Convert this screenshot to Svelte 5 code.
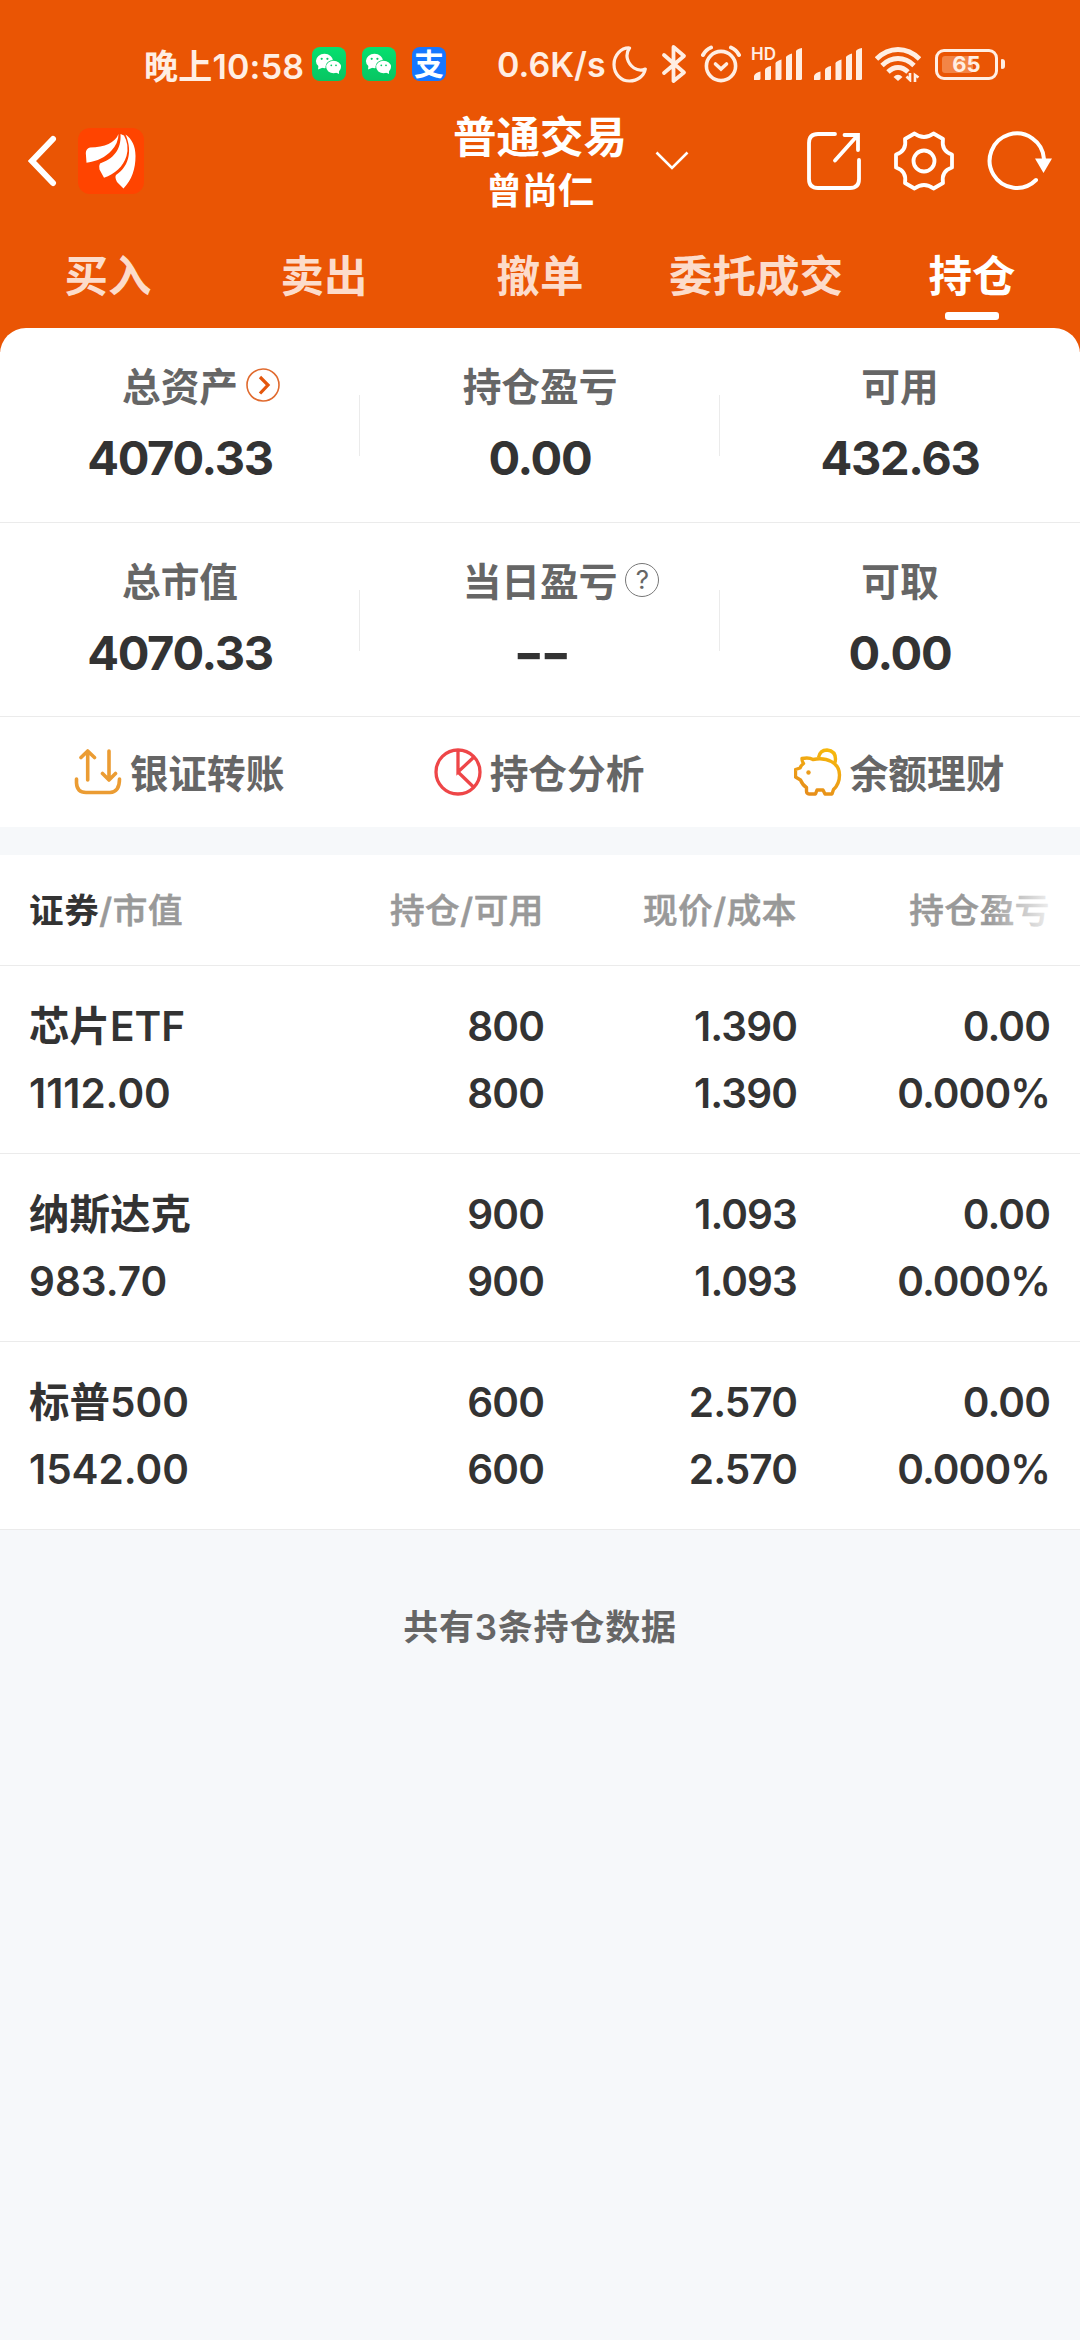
<script lang="ts">
	type Stat = { label: string; value: string; icon?: 'arrow' | 'help' };

	const tabs = ['买入', '卖出', '撤单', '委托成交', '持仓'];
	let activeTab = $state('持仓');

	const stats: Stat[][] = [
		[
			{ label: '总资产', value: '4070.33', icon: 'arrow' },
			{ label: '持仓盈亏', value: '0.00' },
			{ label: '可用', value: '432.63' }
		],
		[
			{ label: '总市值', value: '4070.33' },
			{ label: '当日盈亏', value: '--', icon: 'help' },
			{ label: '可取', value: '0.00' }
		]
	];

	const holdings = [
		{ name: '芯片ETF', market: '1112.00', amount: 800, usable: 800, price: '1.390', cost: '1.390', profit: '0.00', rate: '0.000%' },
		{ name: '纳斯达克', market: '983.70', amount: 900, usable: 900, price: '1.093', cost: '1.093', profit: '0.00', rate: '0.000%' },
		{ name: '标普500', market: '1542.00', amount: 600, usable: 600, price: '2.570', cost: '2.570', profit: '0.00', rate: '0.000%' }
	];
</script>

{#snippet wechat()}
	<svg class="app-icon" viewBox="0 0 34 34">
		<defs>
			<linearGradient id="wx" x1="0" y1="0" x2="0" y2="1">
				<stop offset="0" stop-color="#06e06f" />
				<stop offset="1" stop-color="#07c562" />
			</linearGradient>
		</defs>
		<rect width="34" height="34" rx="8" fill="url(#wx)" />
		<path d="M6.500 18 L6 22.500 L11 20.500z" fill="#fff" />
		<ellipse cx="12.500" cy="14" rx="8.600" ry="7.200" fill="#fff" />
		<ellipse cx="21.600" cy="20" rx="8.200" ry="7" fill="#07cf66" />
		<ellipse cx="21.600" cy="20" rx="7.400" ry="6.200" fill="#fff" />
		<path d="M23 25 L27 27 L27 23z" fill="#fff" />
		<g fill="#07cf66">
			<circle cx="9.700" cy="11.800" r="1.100" />
			<circle cx="15.400" cy="11.800" r="1.100" />
			<circle cx="19.300" cy="18.300" r="0.900" />
			<circle cx="24" cy="18.300" r="0.900" />
		</g>
	</svg>
{/snippet}

{#snippet signal()}
	<svg class="signal" width="48" height="32" viewBox="0 0 48 32" fill="#ffeee3">
		<path d="M0 32v-4q1-3.500 6.500-4.500v7q0 1.500-1.500 1.500z" />
		<path d="M11 32V21.500q1-2.500 6-3.500v12.500q0 1.500-1.500 1.500z" />
		<path d="M21.500 32V15q1-2 6-3.500v19q0 1.500-1.500 1.500z" />
		<path d="M32 32V9q1-2 6-3.500v25q0 1.500-1.500 1.500z" />
		<path d="M42 32V3q1-2 6-3v30.500q0 1.500-1.500 1.500z" />
	</svg>
{/snippet}

<div class="page">
	<header class="top">
		<div class="status-bar">
			<div class="status-left">
				<span class="clock">晚上10:58</span>
				{@render wechat()}
				{@render wechat()}
				<span class="app-icon alipay">支</span>
			</div>
			<div class="status-right">
				<span class="speed">0.6K/s</span>
				<svg class="moon" width="35" height="37" viewBox="0 0 35 37" fill="none" stroke="#ffeee3" stroke-width="3.200" stroke-linejoin="round">
					<path d="M17.500 2 C9 1.500 2 9.500 2 18.500 C2 28 9 35 17.500 35 C25.500 35 32 30 33.300 23 C30 24.500 26 24.500 22 22 C15.500 17.500 12.500 9 17.500 2z" />
				</svg>
				<svg class="bluetooth" width="26" height="40" viewBox="0 0 26 40" fill="none" stroke="#ffeee3" stroke-width="3.800" stroke-linecap="round" stroke-linejoin="round">
					<path d="M3 11 L23 28.500 L12.500 37 V3 L23 12 L3 29" />
				</svg>
				<svg class="alarm" width="40" height="38" viewBox="0 0 40 38" fill="none" stroke="#ffeee3" stroke-width="3.600" stroke-linecap="round">
					<circle cx="20" cy="21" r="14.600" />
					<path d="M14.500 19 L20 24 L25.500 19" stroke-width="3.600" />
					<path d="M2 10 Q5 4.500 10 2.500 M30 2.500 Q35 4.500 38 10" stroke-width="4" />
				</svg>
				<span class="signal-hd">
					<span class="hd">HD</span>
					{@render signal()}
				</span>
				{@render signal()}
				<svg class="wifi" width="46" height="35" viewBox="0 0 46 35" fill="none" stroke="#ffeee3" stroke-width="4.800">
					<path d="M1.500 12 Q11 2.500 23 2.500 Q35 2.500 44.500 12" />
					<path d="M7 18.500 Q14 11.500 23 11.500 Q32 11.500 39 18.500" />
					<path d="M13 25 Q17.500 20.500 23 20.500 Q28.500 20.500 33 25" />
					<path d="M18.500 30 Q23 25.500 27.500 30 L23 34z" fill="#ffeee3" stroke="none" />
					<path d="M31.500 29.500 L35 33 V26 M40 35 V28 L43.500 30.500" stroke-width="2.600" />
				</svg>
				<span class="battery"><span class="level"></span><b>65</b></span>
			</div>
		</div>

		<div class="nav">
			<div class="nav-left">
				<svg class="back" width="30" height="52" viewBox="0 0 30 52" fill="none" stroke="#fff" stroke-width="6" stroke-linecap="round" stroke-linejoin="miter">
					<path d="M25 4 L4 26 L25 48" />
				</svg>
				<svg width="66" height="66" viewBox="0 0 66 66">
					<rect width="66" height="66" rx="12" fill="#ff4400" />
					<g fill="#fff">
						<path d="M40.500 6 C37 15 27 19 12 19.500 Q8 20.500 7.800 25 L8.500 34.800 C20 33 27 29.500 33.500 22.500 Q40.500 15 40.500 6z" />
						<path d="M42.500 6 C43.500 22 35 31 22 35.500 Q20.500 38 21.500 41.500 L26 49.700 C37 46 45 39 48.500 28 Q51.500 17 46 7.500z" />
						<path d="M47.500 6.500 C53.500 20 53 37 38 47 Q36.500 49 39 54 L45.500 60.500 C54 51.500 57.500 41 57.500 28 C57.500 18 54 11 47.500 6.500z" />
					</g>
				</svg>
			</div>
			<div class="title">
				<h1>普通交易</h1>
				<p>曾尚仁</p>
				<svg class="caret" width="34" height="20" viewBox="0 0 34 20" fill="none" stroke="#fff" stroke-width="2.600">
					<path d="M1.500 1.500 L17 17 L32.500 1.500" />
				</svg>
			</div>
			<div class="nav-right">
				<svg width="54" height="58" viewBox="0 0 54 58" fill="none" stroke="#fff" stroke-width="3.800" stroke-linecap="round">
					<path d="M28 2 H11 Q2 2 2 11 V47 Q2 56 11 56 H43 Q52 56 52 47 V28" />
					<path d="M37.500 3 H51 V18 M50 4 L28 28.500" />
				</svg>
				<svg width="60" height="60" viewBox="1 0 60 60" fill="none" stroke="#fff" stroke-width="3.800" stroke-linejoin="round">
					<path d="M21.500 2.500 Q31 9.500 40.500 2.500 L50 8 Q48 20 59 23.500 V36.500 Q48 40 50 52 L40.500 57.500 Q31 50.500 21.500 57.500 L12 52 Q14 40 3 36.500 V23.500 Q14 20 12 8z" />
					<circle cx="31" cy="30" r="10.500" />
				</svg>
				<svg width="66" height="60" viewBox="0 0 66 60" fill="none" stroke="#fff" stroke-width="4" stroke-linecap="round">
					<path d="M49 49 A27.200 27.200 0 1 1 57 28" />
					<path d="M48 27.500 H65 L56.500 42z" fill="#fff" stroke="none" />
				</svg>
			</div>
		</div>

		<nav class="tabs">
			{#each tabs as tab (tab)}
				<button class:active={tab === activeTab} onclick={() => (activeTab = tab)}>{tab}</button>
			{/each}
		</nav>
	</header>

	<main>
		<section class="summary">
			{#each stats as row}
				<div class="stat-row">
					{#each row as stat (stat.label)}
						<div class="stat">
							<span class="label">
								{stat.label}
								{#if stat.icon === 'arrow'}
									<svg class="mark arrow" viewBox="0 0 34 34" fill="none" stroke="#e06a2e">
										<circle cx="17" cy="17" r="16" stroke-width="1.600" />
										<path d="M14 9 L22 17 L14 25.500" stroke="#e4560c" stroke-width="3.200" />
									</svg>
								{:else if stat.icon === 'help'}
									<span class="mark help">?</span>
								{/if}
							</span>
							<span class="value" class:dash={stat.value === '--'}>{stat.value}</span>
						</div>
					{/each}
				</div>
			{/each}

			<div class="actions">
				<div class="action">
					<svg width="48" height="48" viewBox="0 0 48 48" fill="none" stroke="#eb9c33" stroke-width="3.600" stroke-linecap="round" stroke-linejoin="round">
						<path d="M2.500 31 V35 Q3 44.500 12 44.500 H36 Q45.500 44 45.500 31" />
						<path d="M13.700 32 V3 M7 9.500 L13.700 3 L20.500 9.500" />
						<path d="M35 3 V32 M28.500 25.500 L35 32 L41.500 25.500" />
					</svg>
					<span>银证转账</span>
				</div>
				<div class="action">
					<svg width="48" height="48" viewBox="0 0 48 48" fill="none" stroke="#ee4648" stroke-width="3.300">
						<circle cx="24" cy="24" r="22" />
						<path d="M24 2 V24 L40 9 M24 24 L40 39.500" />
					</svg>
					<span>持仓分析</span>
				</div>
				<div class="action">
					<svg width="48" height="48" viewBox="0 0 48 48" fill="none" stroke="url(#gold)" stroke-width="3.400" stroke-linejoin="round">
						<defs>
							<linearGradient id="gold" gradientUnits="userSpaceOnUse" x1="34" y1="0" x2="12" y2="48">
								<stop offset="0" stop-color="#f7b90c" />
								<stop offset="1" stop-color="#e58b1c" />
							</linearGradient>
						</defs>
						<path d="M8 10.500 Q15 9 19 11.500 C33 8.500 45.500 15 45.500 27 Q45.500 36 39.500 41.500 L38 46 H31 L29 42 H23 L21.500 46 H15 Q12.500 46 12.500 43 V39.500 Q8.500 37 6.500 32 L1.500 29 V21.500 L6 20 Q7 17.500 9.500 15.500 Q8 13.500 8 10.500z" />
						<path d="M24.500 9.500 Q26 2 33 2 Q41.500 3 41.500 11 Q41.500 14 40 16" />
						<circle cx="14.500" cy="24.500" r="2.200" fill="#eb9c1c" stroke="none" />
					</svg>
					<span>余额理财</span>
				</div>
			</div>
		</section>

		<section class="holdings">
			<div class="row head">
				<span><b>证券</b>/市值</span>
				<span>持仓/可用</span>
				<span>现价/成本</span>
				<span class="faded">持仓盈亏</span>
			</div>
			{#each holdings as item (item.name)}
				<div class="row">
					<span>{item.name}<br />{item.market}</span>
					<span>{item.amount}<br />{item.usable}</span>
					<span>{item.price}<br />{item.cost}</span>
					<span>{item.profit}<br />{item.rate}</span>
				</div>
			{/each}
		</section>

		<p class="total">共有{holdings.length}条持仓数据</p>
	</main>
</div>

<style>
	:global(body) {
		background: #f6f8fa;
	}
	.page {
		width: 1080px;
		min-height: 2340px;
		background: #f6f8fa;
		font-family: Inter, 'Noto Sans CJK SC', sans-serif;
		font-weight: 600;
		color: #333;
		overflow: hidden;
	}
	svg {
		display: block;
		flex: none;
	}

	/* Orange header, continues behind the rounded corners of the card */
	.top {
		height: 352px;
		background: #ea5504;
		color: #fff;
	}
	.status-bar {
		display: flex;
		justify-content: space-between;
		height: 100px;
		padding: 28px 76px 0 144px;
		box-sizing: border-box;
		color: #ffeee3;
	}
	.status-left,
	.status-right {
		display: flex;
		align-items: center;
		height: 72px;
		white-space: nowrap;
	}
	.clock {
		width: 156px;
		margin-right: 12px;
		font-size: 34px;
		letter-spacing: 0.2px;
	}
	.app-icon {
		width: 34px;
		height: 34px;
		margin-right: 16px;
	}
	.alipay {
		display: flex;
		align-items: center;
		justify-content: center;
		border-radius: 8px;
		background: #1677ff;
		color: #fff;
		font-size: 30px;
		line-height: 34px;
	}
	.speed {
		width: 109px;
		font-size: 34px;
	}
	.moon {
		margin-left: 6px;
	}
	.bluetooth {
		margin-left: 14px;
	}
	.alarm {
		margin-left: 14px;
	}
	.signal-hd {
		position: relative;
		margin: 0 12px 0 13px;
	}
	.hd {
		position: absolute;
		left: -3px;
		top: -4px;
		font-size: 17px;
		line-height: 20px;
	}
	.wifi {
		margin-left: 13px;
	}
	.battery {
		position: relative;
		width: 63px;
		height: 31px;
		margin-left: 14px;
		margin-right: 6px;
		box-sizing: border-box;
		border: 3.5px solid #ffeee3;
		border-radius: 9px;
		text-align: center;
	}
	.battery b {
		position: relative;
		display: block;
		font-size: 22px;
		line-height: 25px;
		font-weight: 700;
	}
	.battery .level {
		position: absolute;
		left: 4px;
		top: 4px;
		bottom: 4px;
		width: 31px;
		border-radius: 3px;
		background: #f38546;
	}
	.battery::after {
		content: '';
		position: absolute;
		right: -10px;
		top: 7px;
		width: 4px;
		height: 10px;
		border-radius: 1px 3px 3px 1px;
		background: #ffeee3;
	}

	.nav {
		display: grid;
		grid-template-columns: 1fr 220px 1fr;
		align-items: center;
		height: 122px;
	}
	.nav-left,
	.nav-right {
		display: flex;
		align-items: center;
	}
	.nav-left {
		padding-left: 28px;
		gap: 20px;
	}
	.nav-right {
		justify-content: flex-end;
		gap: 33px;
		padding-right: 27px;
	}
	.title {
		position: relative;
		padding-top: 4px;
		text-align: center;
	}
	.title h1 {
		margin: 0;
		font-size: 43.5px;
		line-height: 56px;
		font-weight: 700;
	}
	.title p {
		margin: 0;
		font-size: 36px;
		line-height: 52px;
	}
	.caret {
		position: absolute;
		right: -39px;
		top: 46px;
	}

	.tabs {
		display: grid;
		grid-template-columns: repeat(5, 1fr);
		height: 106px;
	}
	.tabs button {
		position: relative;
		padding: 0 0 3px;
		border: 0;
		background: none;
		color: #fcdccb;
		font: inherit;
		font-size: 43.5px;
		font-weight: 700;
		cursor: pointer;
	}
	.tabs .active {
		color: #fff;
	}
	.tabs .active::after {
		content: '';
		position: absolute;
		left: 81px;
		bottom: 8px;
		width: 54px;
		height: 8px;
		border-radius: 3px;
		background: #fff;
	}

	.summary {
		position: relative;
		margin-top: -24px;
		border-radius: 26px 26px 0 0;
		background: #fff;
	}
	.stat-row {
		display: grid;
		grid-template-columns: repeat(3, 1fr);
		height: 195px;
		box-sizing: border-box;
		border-bottom: 1px solid #ebebeb;
	}
	.stat-row + .stat-row {
		height: 194px;
	}
	.stat {
		position: relative;
		display: flex;
		flex-direction: column;
		align-items: center;
		padding-top: 31px;
	}
	.stat + .stat::before {
		content: '';
		position: absolute;
		left: -1px;
		top: 67px;
		width: 1px;
		height: 61px;
		background: #ebebeb;
	}
	.label {
		position: relative;
		font-size: 38.7px;
		line-height: 56px;
		color: #666;
	}
	.mark {
		position: absolute;
		left: calc(100% + 8px);
		top: 9px;
		width: 34px;
		height: 34px;
		box-sizing: border-box;
	}
	.help {
		border: 1.5px solid #777;
		border-radius: 50%;
		font-size: 26px;
		line-height: 31px;
		font-weight: 400;
		text-align: center;
	}
	.value {
		margin-top: 13px;
		font-size: 47px;
		line-height: 60px;
		font-weight: 650;
		letter-spacing: -1.3px;
	}
	.dash {
		font-weight: 800;
		letter-spacing: -3px;
		transform: scaleX(1.4);
	}
	.actions {
		display: grid;
		grid-template-columns: repeat(3, 1fr);
		height: 110px;
	}
	.action {
		display: flex;
		align-items: center;
		justify-content: center;
		gap: 8px;
		padding-right: 2px;
		font-size: 38.7px;
		color: #666;
	}
	.action span {
		padding-bottom: 3px;
	}

	.holdings {
		margin-top: 28px;
		background: #fff;
	}
	.row {
		display: grid;
		grid-template-columns: 265px 250px 253px 253px;
		height: 188px;
		padding: 27px 30px 0 29px;
		box-sizing: border-box;
		border-bottom: 1px solid #ebebeb;
		font-size: 40.5px;
		line-height: 67px;
	}
	.row span + span {
		text-align: right;
		letter-spacing: -0.9px;
	}
	.head {
		height: 111px;
		padding-top: 22px;
		font-size: 34.6px;
		font-weight: 500;
		color: #999;
		-webkit-text-stroke: 0.6px;
	}
	.head span,
	.head span + span {
		letter-spacing: 0.6px;
	}
	.head b {
		font-weight: 600;
		color: #333;
		-webkit-text-stroke: 0;
	}
	.faded {
		position: relative;
	}
	.faded::after {
		content: '';
		position: absolute;
		right: -12px;
		top: 0;
		width: 74px;
		height: 67px;
		background: linear-gradient(to right, rgba(255, 255, 255, 0), #fff);
	}
	.total {
		margin: 71px 0 0;
		font-size: 35px;
		line-height: 52px;
		letter-spacing: 0.8px;
		text-align: center;
		color: #666;
	}
</style>
